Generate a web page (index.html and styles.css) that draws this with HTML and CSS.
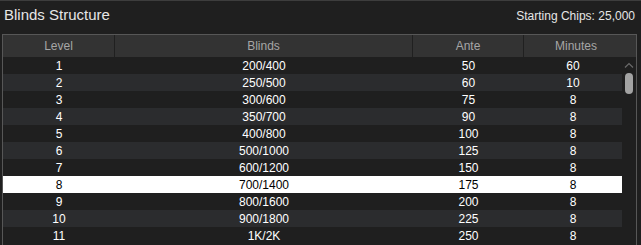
FILE: index.html
```html
<!DOCTYPE html>
<html>
<head>
<meta charset="utf-8">
<link rel="stylesheet" href="styles.css">
</head>
<body>
<div class="panel">
  <div class="titlebar">
    <span class="title">Blinds Structure</span>
    <span class="chips">Starting Chips: 25,000</span>
  </div>
  <div class="table">
    <div class="thead">
      <div class="th">Level</div>
      <div class="th">Blinds</div>
      <div class="th">Ante</div>
      <div class="th last">Minutes</div>
    </div>
    <div class="tbody">
      <div class="rows">
        <div class="row"><span>1</span><span>200/400</span><span>50</span><span>60</span></div>
        <div class="row alt"><span>2</span><span>250/500</span><span>60</span><span>10</span></div>
        <div class="row"><span>3</span><span>300/600</span><span>75</span><span>8</span></div>
        <div class="row alt"><span>4</span><span>350/700</span><span>90</span><span>8</span></div>
        <div class="row"><span>5</span><span>400/800</span><span>100</span><span>8</span></div>
        <div class="row alt"><span>6</span><span>500/1000</span><span>125</span><span>8</span></div>
        <div class="row"><span>7</span><span>600/1200</span><span>150</span><span>8</span></div>
        <div class="row current"><span>8</span><span>700/1400</span><span>175</span><span>8</span></div>
        <div class="row"><span>9</span><span>800/1600</span><span>200</span><span>8</span></div>
        <div class="row alt"><span>10</span><span>900/1800</span><span>225</span><span>8</span></div>
        <div class="row"><span>11</span><span>1K/2K</span><span>250</span><span>8</span></div>
      </div>
      <div class="scrollbar">
        <svg class="arrow" width="10" height="6" viewBox="0 0 10 6"><path d="M1 5.5 L5 1.5 L9 5.5" fill="none" stroke="#6a6a6a" stroke-width="1.2"/></svg>
        <div class="thumb"></div>
      </div>
    </div>
  </div>
</div>
</body>
</html>
```
FILE: styles.css
```css
html, body {
  margin: 0;
  padding: 0;
  background: #1f1f1f;
}
body {
  width: 641px;
  height: 245px;
  overflow: hidden;
  font-family: "Liberation Sans", Arial, sans-serif;
}
.panel {
  border-top: 1px solid #3d3d3d;
  height: 244px;
  display: flex;
  flex-direction: column;
}
.titlebar {
  height: 33px;
  box-sizing: border-box;
  display: flex;
  justify-content: space-between;
  align-items: baseline;
  padding: 5px 6px 0 4px;
}
.title {
  font-size: 15px;
  color: #e6e6e6;
}
.chips {
  font-size: 12px;
  color: #e6e6e6;
}
.table {
  margin: 0 4px 0 2px;
  border: 1px solid #575757;
  border-bottom: none;
  flex: 1;
  display: flex;
  flex-direction: column;
  min-height: 0;
}
.thead {
  display: grid;
  grid-template-columns: 112px 298px 111px 1fr;
  height: 22px;
  background: #333333;
}
.th {
  border-right: 1px solid #202020;
  color: #a6a6a6;
  font-size: 12px;
  display: flex;
  align-items: center;
  justify-content: center;
}
.th.last {
  border-right: none;
  padding-right: 8px;
}
.tbody {
  flex: 1;
  display: flex;
  min-height: 0;
  overflow: hidden;
}
.rows {
  width: 619px;
}
.row {
  display: grid;
  grid-template-columns: 112px 298px 111px 98px;
  height: 17px;
  background: #1f1f1f;
  color: #ffffff;
  font-size: 12px;
}
.row span {
  display: flex;
  align-items: center;
  justify-content: center;
}
.row.alt {
  background: #2b2c2e;
}
.row.current {
  background: #ffffff;
  color: #000000;
}
.scrollbar {
  flex: 1;
  display: flex;
  flex-direction: column;
  align-items: center;
  padding-top: 5px;
  padding-right: 1px;
}
.arrow {
  display: block;
}
.thumb {
  margin-top: 5px;
  width: 8px;
  height: 21px;
  border-radius: 4px;
  background: #a3a3a3;
}
```
